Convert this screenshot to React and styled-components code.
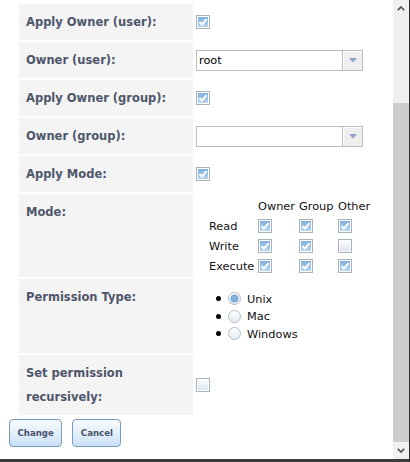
import { Fragment } from "react";
import styled, { createGlobalStyle } from "styled-components";

const GlobalStyle = createGlobalStyle`
  html, body {
    margin: 0;
    padding: 0;
    background: #fff;
    overflow: hidden;
  }
  body {
    font-family: "DejaVu Sans", Verdana, sans-serif;
  }
`;

const Frame = styled.div`
  width: 410px;
  height: 462px;
  box-sizing: border-box;
  border-right: 1px solid #2e2e2e;
  border-bottom: 3px solid #3c3c3c;
  display: flex;
`;

const Content = styled.div`
  flex: 1;
  display: flex;
  flex-direction: column;
  padding-top: 4px;
`;

const Form = styled.div`
  display: grid;
  grid-template-columns: 174px 200px;
  row-gap: 2px;
  margin-left: 19px;
`;

const Label = styled.div`
  background: #f4f4f4;
  padding: 6px 7px;
  line-height: 24px;
  font-size: 11.5px;
  font-weight: bold;
  color: #4d566a;
`;

const Value = styled.div`
  display: flex;
  align-items: ${p => (p.$top ? "flex-start" : "center")};
  padding-left: 3px;
  font-size: 11.33px;
  color: #111;
`;

const Select = styled.div`
  width: 167px;
  height: 21px;
  box-sizing: border-box;
  border: 1px solid #b5bcc7;
  display: flex;
  background: #fff;
`;

const SelectText = styled.span`
  flex: 1;
  padding-left: 2px;
  line-height: 19px;
  color: #000;
`;

const SelectArrow = styled.span`
  width: 19px;
  border-left: 1px solid #b5bcc7;
  background: #efefef;
  box-shadow: inset 1px 1px 0 #fff;
  display: flex;
  align-items: center;
  justify-content: center;
`;

const ModeGrid = styled.div`
  display: grid;
  grid-template-columns: 49px 41px 39px 40px;
  grid-auto-rows: 20px;
  align-items: center;
  padding: 2px 0 1px 13px;
`;

const RadioList = styled.ul`
  list-style: none;
  margin: 0;
  padding: 11px 0 10.5px 20px;
`;

const RadioItem = styled.li`
  display: flex;
  align-items: center;
  height: 17.5px;
`;

const Bullet = styled.span`
  width: 5px;
  height: 5px;
  border-radius: 50%;
  background: #000;
  margin-right: 7px;
`;

const RadioText = styled.span`
  margin-left: 6px;
`;

const ButtonBar = styled.div`
  display: flex;
  gap: 10px;
  padding: 4px 0 0 9px;
`;

const Button = styled.button`
  height: 28px;
  padding: 0 7.5px;
  border: 1px solid #769dc0;
  border-radius: 4px;
  background: linear-gradient(to bottom, #f6fafe 0%, #e3effb 50%, #c9e0f6 100%);
  font-family: "DejaVu Sans", Verdana, sans-serif;
  font-size: 8.6px;
  font-weight: bold;
  color: #47516a;
`;

const ScrollBar = styled.div`
  width: 16px;
  display: flex;
  flex-direction: column;
  background: #f0f0f0;
`;

const ScrollButton = styled.div`
  height: 17px;
  display: flex;
  align-items: center;
  justify-content: center;
`;

const ScrollTrack = styled.div`
  flex: 1;
  padding-top: 86px;
  display: flex;
  flex-direction: column;
`;

const ScrollThumb = styled.div`
  flex: 1;
  background: #cdcdcd;
`;

function CheckBox({ checked }) {
  return (
    <svg width="14" height="14" viewBox="0 0 14 14">
      <defs>
        <linearGradient id="cbOn" x1="0" y1="0" x2="0" y2="1">
          <stop offset="0" stopColor="#7db0dd" />
          <stop offset="1" stopColor="#b8d6f0" />
        </linearGradient>
        <linearGradient id="cbOff" x1="0" y1="0" x2="0" y2="1">
          <stop offset="0" stopColor="#fafcfe" />
          <stop offset="1" stopColor="#dbe6f1" />
        </linearGradient>
      </defs>
      <rect x="0.5" y="0.5" width="13" height="13" fill="#fff" stroke="#a9b1bd" />
      <rect x="2" y="2" width="10" height="10" fill={checked ? "url(#cbOn)" : "url(#cbOff)"} />
      {checked && (
        <path d="M3.6 7.2 L6 9.6 L10.6 4.2" stroke="#fff" strokeWidth="2" fill="none" />
      )}
    </svg>
  );
}

function Radio({ checked }) {
  return (
    <svg width="13" height="13" viewBox="0 0 13 13">
      <defs>
        <linearGradient id="rdBg" x1="0" y1="0" x2="0" y2="1">
          <stop offset="0" stopColor="#ffffff" />
          <stop offset="1" stopColor="#e3eaf2" />
        </linearGradient>
      </defs>
      <circle cx="6.5" cy="6.5" r="6" fill="url(#rdBg)" stroke="#b3bbc6" />
      {checked && <circle cx="6.5" cy="6.5" r="3.6" fill="#86b3dc" stroke="#6a9ccb" strokeWidth="0.8" />}
    </svg>
  );
}

function Chevron({ down }) {
  return (
    <svg width="8" height="5" viewBox="0 0 8 5">
      <path
        d={down ? "M0.8 0.8 L4 4 L7.2 0.8" : "M0.8 4.2 L4 1 L7.2 4.2"}
        stroke="#555"
        strokeWidth="1.7"
        fill="none"
      />
    </svg>
  );
}

function Triangle() {
  return (
    <svg width="8" height="5" viewBox="0 0 8 5">
      <path d="M0 0 L8 0 L4 4.5 Z" fill="#8ea4c7" />
    </svg>
  );
}

const modeRows = [
  ["Read", [true, true, true]],
  ["Write", [true, true, false]],
  ["Execute", [true, true, true]],
];

const permTypes = [
  ["Unix", true],
  ["Mac", false],
  ["Windows", false],
];

export default function App() {
  return (
    <>
      <GlobalStyle />
      <Frame>
        <Content>
          <Form>
            <Label>Apply Owner (user):</Label>
            <Value>
              <CheckBox checked />
            </Value>

            <Label>Owner (user):</Label>
            <Value>
              <Select>
                <SelectText>root</SelectText>
                <SelectArrow>
                  <Triangle />
                </SelectArrow>
              </Select>
            </Value>

            <Label>Apply Owner (group):</Label>
            <Value>
              <CheckBox checked />
            </Value>

            <Label>Owner (group):</Label>
            <Value>
              <Select>
                <SelectText></SelectText>
                <SelectArrow>
                  <Triangle />
                </SelectArrow>
              </Select>
            </Value>

            <Label>Apply Mode:</Label>
            <Value>
              <CheckBox checked />
            </Value>

            <Label>Mode:</Label>
            <Value $top>
              <ModeGrid>
                <span></span>
                <span>Owner</span>
                <span>Group</span>
                <span>Other</span>
                {modeRows.map(([name, flags]) => (
                  <Fragment key={name}>
                    <span>{name}</span>
                    {flags.map((f, i) => (
                      <CheckBox key={i} checked={f} />
                    ))}
                  </Fragment>
                ))}
              </ModeGrid>
            </Value>

            <Label>Permission Type:</Label>
            <Value $top>
              <RadioList>
                {permTypes.map(([name, on]) => (
                  <RadioItem key={name}>
                    <Bullet />
                    <Radio checked={on} />
                    <RadioText>{name}</RadioText>
                  </RadioItem>
                ))}
              </RadioList>
            </Value>

            <Label>Set permission recursively:</Label>
            <Value>
              <CheckBox />
            </Value>
          </Form>
          <ButtonBar>
            <Button>Change</Button>
            <Button>Cancel</Button>
          </ButtonBar>
        </Content>
        <ScrollBar>
          <ScrollButton>
            <Chevron />
          </ScrollButton>
          <ScrollTrack>
            <ScrollThumb />
          </ScrollTrack>
          <ScrollButton>
            <Chevron down />
          </ScrollButton>
        </ScrollBar>
      </Frame>
    </>
  );
}
